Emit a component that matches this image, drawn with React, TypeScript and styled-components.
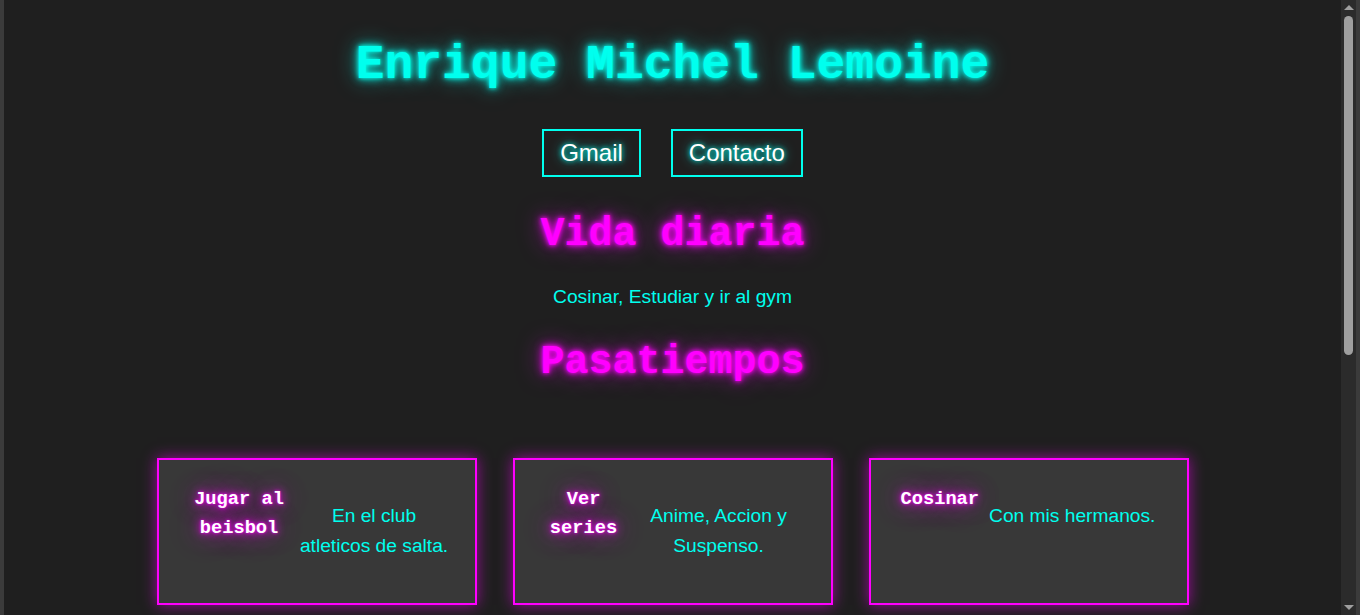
import React from "react";
import styled, { createGlobalStyle } from "styled-components";

const CYAN = "#00ffee";
const MAGENTA = "#ff00ff";
const TRACK = "#2b2b2b";
const THUMB = "#9f9f9f";

const GlobalStyle = createGlobalStyle`
  html, body {
    margin: 0;
    padding: 0;
    height: 100%;
    overflow: hidden;
    background: #3b3b3b;
  }
  #root {
    height: 100%;
  }
`;

const Frame = styled.div`
  display: flex;
  height: 100vh;
`;

const Edge = styled.div`
  flex: 0 0 4px;
  background: #3b3b3b;
`;

const Scroller = styled.div`
  flex: 1;
  min-width: 0;
  overflow-y: auto;
  scrollbar-width: none;
  background: #1f1f1f;
  &::-webkit-scrollbar {
    display: none;
  }
`;

/* drawn stand-in for the browser's dark scrollbar */
const ScrollBar = styled.div`
  flex: 0 0 15px;
  display: flex;
  flex-direction: column;
  background: ${TRACK};
`;

const ScrollArrow = styled.div<{ $down?: boolean }>`
  flex: 0 0 15px;
  display: flex;
  align-items: center;
  justify-content: center;
  &::before {
    content: "";
    width: 0;
    height: 0;
    border-left: 5px solid transparent;
    border-right: 5px solid transparent;
    ${(p) =>
      p.$down
        ? `border-top: 5px solid ${THUMB};`
        : `border-bottom: 5px solid ${THUMB};`}
  }
`;

const ScrollTrack = styled.div`
  flex: 1;
  padding: 1px 3px;
`;

const ScrollThumb = styled.div`
  height: 339px;
  border-radius: 5px;
  background: ${THUMB};
`;

const Page = styled.main`
  display: flex;
  flex-direction: column;
  align-items: center;
  padding: 27px 0 457px;
  font-family: "Liberation Sans", Arial, sans-serif;
  line-height: 1.6;
`;

const Title = styled.h1`
  margin: 0;
  font-family: "Liberation Mono", "Courier New", monospace;
  font-weight: bold;
  font-size: 48px;
  line-height: 76.8px;
  color: ${CYAN};
  text-shadow: 0 0 4px ${CYAN}, 0 0 10px ${CYAN}, 0 0 22px rgba(0, 255, 238, 0.6);
`;

const Nav = styled.nav`
  display: flex;
  gap: 30px;
  margin-top: 25px;
`;

const NavLink = styled.a`
  display: block;
  padding: 8px 16px;
  border: 2px solid ${CYAN};
  font-family: "Liberation Sans", Arial, sans-serif;
  font-size: 24px;
  line-height: normal;
  color: #ffffff;
  text-decoration: none;
  text-shadow: 0 0 5px ${CYAN}, 0 0 12px rgba(0, 255, 238, 0.7);
`;

const SectionTitle = styled.h2<{ $top: number }>`
  margin: ${(p) => p.$top}px 0 0;
  font-family: "Liberation Mono", "Courier New", monospace;
  font-weight: bold;
  font-size: 40px;
  line-height: 64px;
  color: ${MAGENTA};
  text-shadow: 0 0 4px ${MAGENTA}, 0 0 10px ${MAGENTA}, 0 0 24px rgba(255, 0, 255, 0.6);
`;

const Lead = styled.p`
  margin: 15px 0 0;
  font-size: 19.2px;
  line-height: 30.72px;
  color: ${CYAN};
`;

const Cards = styled.section`
  display: flex;
  justify-content: center;
  gap: 36px;
  margin-top: 63px;
`;

const Card = styled.article`
  box-sizing: border-box;
  width: 320px;
  display: flex;
  align-items: flex-start;
  padding: 22px 26px 22px 20px;
  border: 2px solid ${MAGENTA};
  background: #383838;
  box-shadow: 0 0 14px rgba(255, 0, 255, 0.55);
`;

const CardTitle = styled.h3`
  flex: 0 1.17 auto;
  margin: 3px 0 0;
  padding: 0 10px;
  font-family: "Liberation Mono", "Courier New", monospace;
  font-weight: bold;
  font-size: 18.72px;
  line-height: 1.6;
  text-align: center;
  color: #ffffff;
  text-shadow: 0 0 3px ${MAGENTA}, 0 0 8px ${MAGENTA}, 0 0 22px rgba(255, 0, 255, 0.75),
    0 0 40px rgba(255, 0, 255, 0.45);
`;

const CardText = styled.p`
  flex: 0 1 auto;
  margin: 19.2px 0;
  font-size: 19.2px;
  line-height: 1.6;
  text-align: center;
  color: ${CYAN};
`;

const hobbies = [
  { title: "Jugar al beisbol", text: "En el club atleticos de salta." },
  { title: "Ver series", text: "Anime, Accion y Suspenso." },
  { title: "Cosinar", text: "Con mis hermanos." },
];

export default function App() {
  return (
    <>
      <GlobalStyle />
      <Frame>
        <Edge />
        <Scroller>
          <Page>
            <Title>Enrique Michel Lemoine</Title>
            <Nav>
              <NavLink href="#">Gmail</NavLink>
              <NavLink href="#">Contacto</NavLink>
            </Nav>
            <SectionTitle $top={26}>Vida diaria</SectionTitle>
            <Lead>Cosinar, Estudiar y ir al gym</Lead>
            <SectionTitle $top={18}>Pasatiempos</SectionTitle>
            <Cards>
              {hobbies.map((h) => (
                <Card key={h.title}>
                  <CardTitle>{h.title}</CardTitle>
                  <CardText>{h.text}</CardText>
                </Card>
              ))}
            </Cards>
          </Page>
        </Scroller>
        <ScrollBar>
          <ScrollArrow />
          <ScrollTrack>
            <ScrollThumb />
          </ScrollTrack>
          <ScrollArrow $down />
        </ScrollBar>
        <Edge />
      </Frame>
    </>
  );
}
